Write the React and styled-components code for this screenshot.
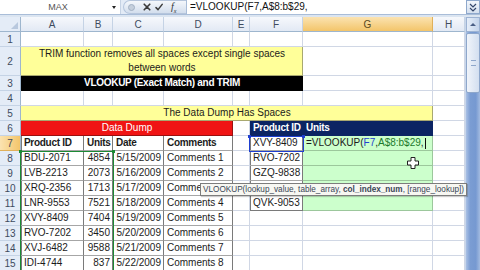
import React from 'react';
import styled, { createGlobalStyle, css } from 'styled-components';

const GlobalStyle = createGlobalStyle`
  html, body { margin: 0; padding: 0; background: #fff; }
  body { font-family: "Liberation Sans", Arial, sans-serif; }
  #root { width: 480px; height: 270px; }
`;

const COLS = [
  { k: 'A', w: 63 }, { k: 'B', w: 29 }, { k: 'C', w: 51 }, { k: 'D', w: 69 },
  { k: 'E', w: 17 }, { k: 'F', w: 53 }, { k: 'G', w: 130 }, { k: 'H', w: 32 },
];

const YEL = '#ffff99';
const RED = '#f01414';
const NAVY = '#0b2463';
const GREEN = '#ccffcc';
const BOX = '#7a7a7a';

const Frame = styled.div`
  position: relative;
  width: 480px;
  height: 270px;
  overflow: hidden;
  background: #dbe5f1;
  display: flex;
  flex-direction: column;
  font-family: "Liberation Sans", Arial, sans-serif;
`;

const FormulaBar = styled.div`
  display: flex;
  height: 14px;
  background: #e3ebf6;
  border-bottom: 1px solid #a9bdd8;
  margin-bottom: 2px;
`;

const NameBox = styled.div`
  width: 120px;
  background: #fff;
  display: flex;
  align-items: center;
  border-right: 1px solid #c6d3e4;
`;

const NameText = styled.span`
  flex: 1;
  text-align: center;
  font-size: 9px;
  color: #555;
  padding-left: 4px;
`;

const DropArrow = styled.span`
  width: 0;
  height: 0;
  border-left: 2.5px solid transparent;
  border-right: 2.5px solid transparent;
  border-top: 3px solid #222;
  margin-right: 4px;
`;

const FuncPill = styled.div`
  width: 63px;
  margin-left: 2px;
  display: flex;
  align-items: center;
  gap: 4px;
  padding-left: 4px;
  box-sizing: border-box;
  border-radius: 7px 0 0 7px;
  background: linear-gradient(#f4f7fb, #d3deed);
  border: 1px solid #b5c5dc;
  border-right: none;
`;

const PillDot = styled.span`
  width: 5px;
  height: 5px;
  border-radius: 50%;
  background: #c5cfdc;
  border: 1px solid #a3b1c4;
  margin-right: 4px;
`;

const PillIcon = styled.svg`
  width: 8px;
  height: 8px;
  flex: none;
`;

const Fx = styled.span`
  font-family: "Liberation Serif", "Times New Roman", serif;
  font-style: italic;
  font-size: 10px;
  color: #333;
  margin-left: 4px;
  sub { font-size: 6px; }
`;

const FormulaInput = styled.div`
  flex: 1;
  background: #fff;
  border-left: 1px solid #a9bdd8;
  font-size: 10px;
  line-height: 14px;
  padding-left: 3px;
  color: #111;
  white-space: nowrap;
`;

const ExpandBtn = styled.div`
  width: 14px;
  background: linear-gradient(#f2f6fb, #d5e0ef);
  border: 1px solid #8ea8cc;
  box-sizing: border-box;
  display: flex;
  align-items: center;
  justify-content: center;
`;

const Workspace = styled.div`
  flex: 1;
  display: flex;
  min-height: 0;
`;

const Sheet = styled.div`
  position: relative;
  display: grid;
  grid-template-columns: 21px ${COLS.map((c) => `${c.w}px`).join(' ')};
  grid-template-rows: 15px 15px 29px repeat(13, 15px);
  background: #fff;
  width: 465px;
  flex: none;
`;

const headBase = css`
  box-sizing: border-box;
  font-size: 10px;
  color: #3e4b5e;
  display: flex;
  align-items: center;
  justify-content: center;
  border-right: 1px solid #9eb6ce;
  border-bottom: 1px solid #9eb6ce;
`;

const Corner = styled.div`
  ${headBase};
  background: #e4ecf7;
  position: relative;
  &::after {
    content: '';
    position: absolute;
    right: 2px;
    bottom: 2px;
    border-left: 7px solid transparent;
    border-bottom: 7px solid #b8c8de;
  }
`;

const ColHead = styled.div`
  ${headBase};
  background: ${(p) => (p.$active ? 'linear-gradient(#fbe3b1, #f3c56a)' : 'linear-gradient(#f6f8fc, #e2e9f4)')};
  border-right-color: ${(p) => (p.$active ? '#e0b05a' : '#c5d3e5')};
  color: ${(p) => (p.$active ? '#5b4a22' : '#3e4b5e')};
`;

const RowHead = styled.div`
  ${headBase};
  background: ${(p) => (p.$active ? 'linear-gradient(90deg, #fbe3b1, #f3c56a)' : '#e4ecf7')};
  border-bottom-color: ${(p) => (p.$active ? '#e0b05a' : '#c5d3e5')};
`;

const Cell = styled.div`
  grid-column: span ${(p) => p.$span || 1};
  box-sizing: border-box;
  border-right: 1px solid ${(p) => p.$line || '#d0d7e5'};
  border-bottom: 1px solid ${(p) => p.$hline || p.$line || '#d0d7e5'};
  background: ${(p) => p.$bg || '#fff'};
  color: ${(p) => p.$color || '#1b1b1b'};
  font-size: 10px;
  font-weight: ${(p) => (p.$bold ? 700 : 400)};
  letter-spacing: ${(p) => (p.$bold ? '-0.3px' : '0')};
  line-height: 14px;
  display: flex;
  align-items: center;
  justify-content: ${(p) => (p.$align === 'center' ? 'center' : p.$align === 'right' ? 'flex-end' : 'flex-start')};
  text-align: ${(p) => p.$align || 'left'};
  padding: 0 2px 0 3px;
  white-space: nowrap;
  overflow: visible;
  ${(p) => p.$edge && css`box-shadow: inset 1px 0 0 ${BOX};`}
`;

const Ref = styled.span`
  color: ${(p) => p.$c};
`;

const Caret = styled.span`
  display: inline-block;
  width: 1px;
  height: 11px;
  background: #111;
  margin-left: 1px;
`;

const RefBox = styled.div`
  position: absolute;
  left: ${(p) => p.$x}px;
  top: ${(p) => p.$y}px;
  width: ${(p) => p.$w}px;
  height: ${(p) => p.$h}px;
  border: 1px solid ${(p) => p.$c};
  box-sizing: border-box;
  pointer-events: none;
  &::before, &::after {
    content: '';
    position: absolute;
    width: 3px;
    height: 3px;
    background: ${(p) => p.$c};
    top: -2px;
  }
  &::before { left: -2px; }
  &::after { right: -2px; }
`;

const ScrollBar = styled.div`
  width: 15px;
  display: flex;
  flex-direction: column;
  background: linear-gradient(90deg, #a9c0e4, #7b9dd3 30%, #7699d1 70%, #a3bbe0);
  border-left: 1px solid #c8d6ea;
  box-sizing: border-box;
`;

const ScrollBtn = styled.div`
  height: 15px;
  box-sizing: border-box;
  background: linear-gradient(90deg, #e6eef9, #c4d4eb);
  border: 1px solid #9db3d3;
  display: flex;
  align-items: center;
  justify-content: center;
`;

const UpTri = styled.span`
  width: 0;
  height: 0;
  border-left: 3px solid transparent;
  border-right: 3px solid transparent;
  border-bottom: 3px solid #4a5f86;
`;

const Thumb = styled.div`
  height: 60px;
  margin-top: 1px;
  box-sizing: border-box;
  background: linear-gradient(90deg, #f0f4fa, #d3dff0);
  border: 1px solid #8ea7cb;
  border-radius: 2px;
  display: flex;
  align-items: center;
  justify-content: center;
`;

const Grip = styled.span`
  width: 5px;
  height: 4px;
  border-top: 1px solid #8ea7cb;
  border-bottom: 1px solid #8ea7cb;
`;

const Tooltip = styled.div`
  position: absolute;
  left: 200px;
  top: 183px;
  height: 13px;
  box-sizing: border-box;
  background: #f7f7f2;
  border: 1px solid #7c7c7c;
  font-size: 8.2px;
  line-height: 11px;
  color: #3a4656;
  padding: 0 2px;
  white-space: nowrap;
  box-shadow: 1px 1px 1px rgba(0, 0, 0, 0.2);
  b { font-weight: 700; }
`;

const Cursor = styled.svg`
  position: absolute;
  left: 407px;
  top: 157px;
  width: 12px;
  height: 12px;
`;

const blank = (n) => Array.from({ length: n }, () => ({}));

const table = [
  ['BDU-2071', '4854', '5/15/2009', 'Comments 1'],
  ['LVB-2213', '2073', '5/16/2009', 'Comments 2'],
  ['XRQ-2356', '1713', '5/17/2009', 'Comme'],
  ['LNR-9553', '7521', '5/18/2009', 'Comments 4'],
  ['XVY-8409', '7404', '5/19/2009', 'Comments 5'],
  ['RVO-7202', '3450', '5/20/2009', 'Comments 6'],
  ['XVJ-6482', '9588', '5/21/2009', 'Comments 7'],
  ['IDI-4744', '837', '5/22/2009', 'Comments 8'],
];
const lookups = ['RVO-7202', 'GZQ-9838', '', 'QVK-9053'];

const formula = (
  <>
    =VLOOKUP(<Ref $c="#1f3fd0">F7</Ref>,<Ref $c="#1c7a2c">A$8:b$29</Ref>,<Caret />
  </>
);

const HL = '#a6a6a6';

const rows = [
  { n: 1, cells: blank(8) },
  {
    n: 2,
    cells: [
      { span: 6, bg: YEL, line: '#a8a870', align: 'center', text: (<span>TRIM function removes all spaces except single spaces<br />between words</span>) },
      {}, {},
    ],
  },
  {
    n: 3,
    cells: [
      { span: 6, bg: '#000', color: '#fff', bold: true, align: 'center', line: '#000', text: 'VLOOKUP (Exact Match) and TRIM' },
      {}, {},
    ],
  },
  { n: 4, cells: blank(8) },
  {
    n: 5,
    cells: [{ span: 7, bg: YEL, line: '#a8a870', align: 'center', text: 'The Data Dump Has Spaces' }, {}],
  },
  {
    n: 6,
    cells: [
      { span: 4, bg: RED, color: '#fff', align: 'center', line: '#9a1010', text: 'Data Dump' },
      {},
      { bg: NAVY, color: '#fff', bold: true, line: NAVY, text: 'Product ID' },
      { bg: NAVY, color: '#fff', bold: true, line: NAVY, text: 'Units' },
      {},
    ],
  },
  {
    n: 7,
    active: true,
    cells: [
      { line: BOX, hline: HL, edge: true, bold: true, text: 'Product ID' },
      { line: BOX, hline: HL, bold: true, text: 'Units' },
      { line: BOX, hline: HL, bold: true, text: 'Date' },
      { line: BOX, hline: HL, bold: true, text: 'Comments' },
      {},
      { line: BOX, hline: HL, edge: true, text: 'XVY-8409' },
      { bg: GREEN, line: '#9cc79c', text: formula },
      {},
    ],
  },
  ...table.map((r, i) => ({
    n: 8 + i,
    cells: [
      { line: BOX, hline: HL, edge: true, text: r[0] },
      { line: BOX, hline: HL, align: 'right', text: r[1] },
      { line: BOX, hline: HL, align: 'right', text: r[2] },
      { line: BOX, hline: HL, text: r[3] },
      {},
      i < 4 ? { line: BOX, hline: i === 3 ? BOX : HL, edge: true, text: lookups[i] } : {},
      i < 4 ? { bg: GREEN, line: '#9cc79c' } : {},
      {},
    ],
  })),
];

export default function App() {
  return (
    <>
      <GlobalStyle />
      <Frame>
        <FormulaBar>
          <NameBox>
            <NameText>MAX</NameText>
            <DropArrow />
          </NameBox>
          <FuncPill>
            <PillDot />
            <PillIcon viewBox="0 0 8 8">
              <path d="M1.2 1.2 L6.8 6.8 M6.8 1.2 L1.2 6.8" stroke="#3a3a3a" strokeWidth="1.6" strokeLinecap="round" />
            </PillIcon>
            <PillIcon viewBox="0 0 8 8">
              <path d="M1 4.6 L3 6.6 L7.2 1.4" stroke="#3a3a3a" strokeWidth="1.5" fill="none" strokeLinecap="round" />
            </PillIcon>
            <Fx>f<sub>x</sub></Fx>
          </FuncPill>
          <FormulaInput>=VLOOKUP(F7,A$8:b$29,</FormulaInput>
          <ExpandBtn>
            <svg width="8" height="9" viewBox="0 0 8 9">
              <path d="M1 1 L4 4 L7 1 M1 5 L4 8 L7 5" stroke="#34466a" strokeWidth="1.2" fill="none" />
            </svg>
          </ExpandBtn>
        </FormulaBar>
        <Workspace>
          <Sheet>
            <Corner />
            {COLS.map((c) => (
              <ColHead key={c.k} $active={c.k === 'G'}>{c.k}</ColHead>
            ))}
            {rows.map((r) => (
              <React.Fragment key={r.n}>
                <RowHead $active={r.active}>{r.n}</RowHead>
                {r.cells.map((c, i) => (
                  <Cell
                    key={i}
                    $span={c.span}
                    $bg={c.bg}
                    $color={c.color}
                    $bold={c.bold}
                    $align={c.align}
                    $line={c.line}
                    $hline={c.hline}
                    $edge={c.edge}
                  >
                    {c.text}
                  </Cell>
                ))}
              </React.Fragment>
            ))}
            <RefBox $x={20} $y={134} $w={94} $h={130} $c="#1c8a34" />
            <RefBox $x={249} $y={119} $w={55} $h={16} $c="#1f3fd0" />
          </Sheet>
          <ScrollBar>
            <ScrollBtn><UpTri /></ScrollBtn>
            <Thumb><Grip /></Thumb>
          </ScrollBar>
        </Workspace>
        <Tooltip>
          VLOOKUP(lookup_value, table_array, <b>col_index_num</b>, [range_lookup])
        </Tooltip>
        <Cursor viewBox="0 0 12 12">
          <path d="M4 0.5 H8 V4 H11.5 V8 H8 V11.5 H4 V8 H0.5 V4 H4 Z" fill="#fff" stroke="#222" strokeWidth="1" />
        </Cursor>
      </Frame>
    </>
  );
}
